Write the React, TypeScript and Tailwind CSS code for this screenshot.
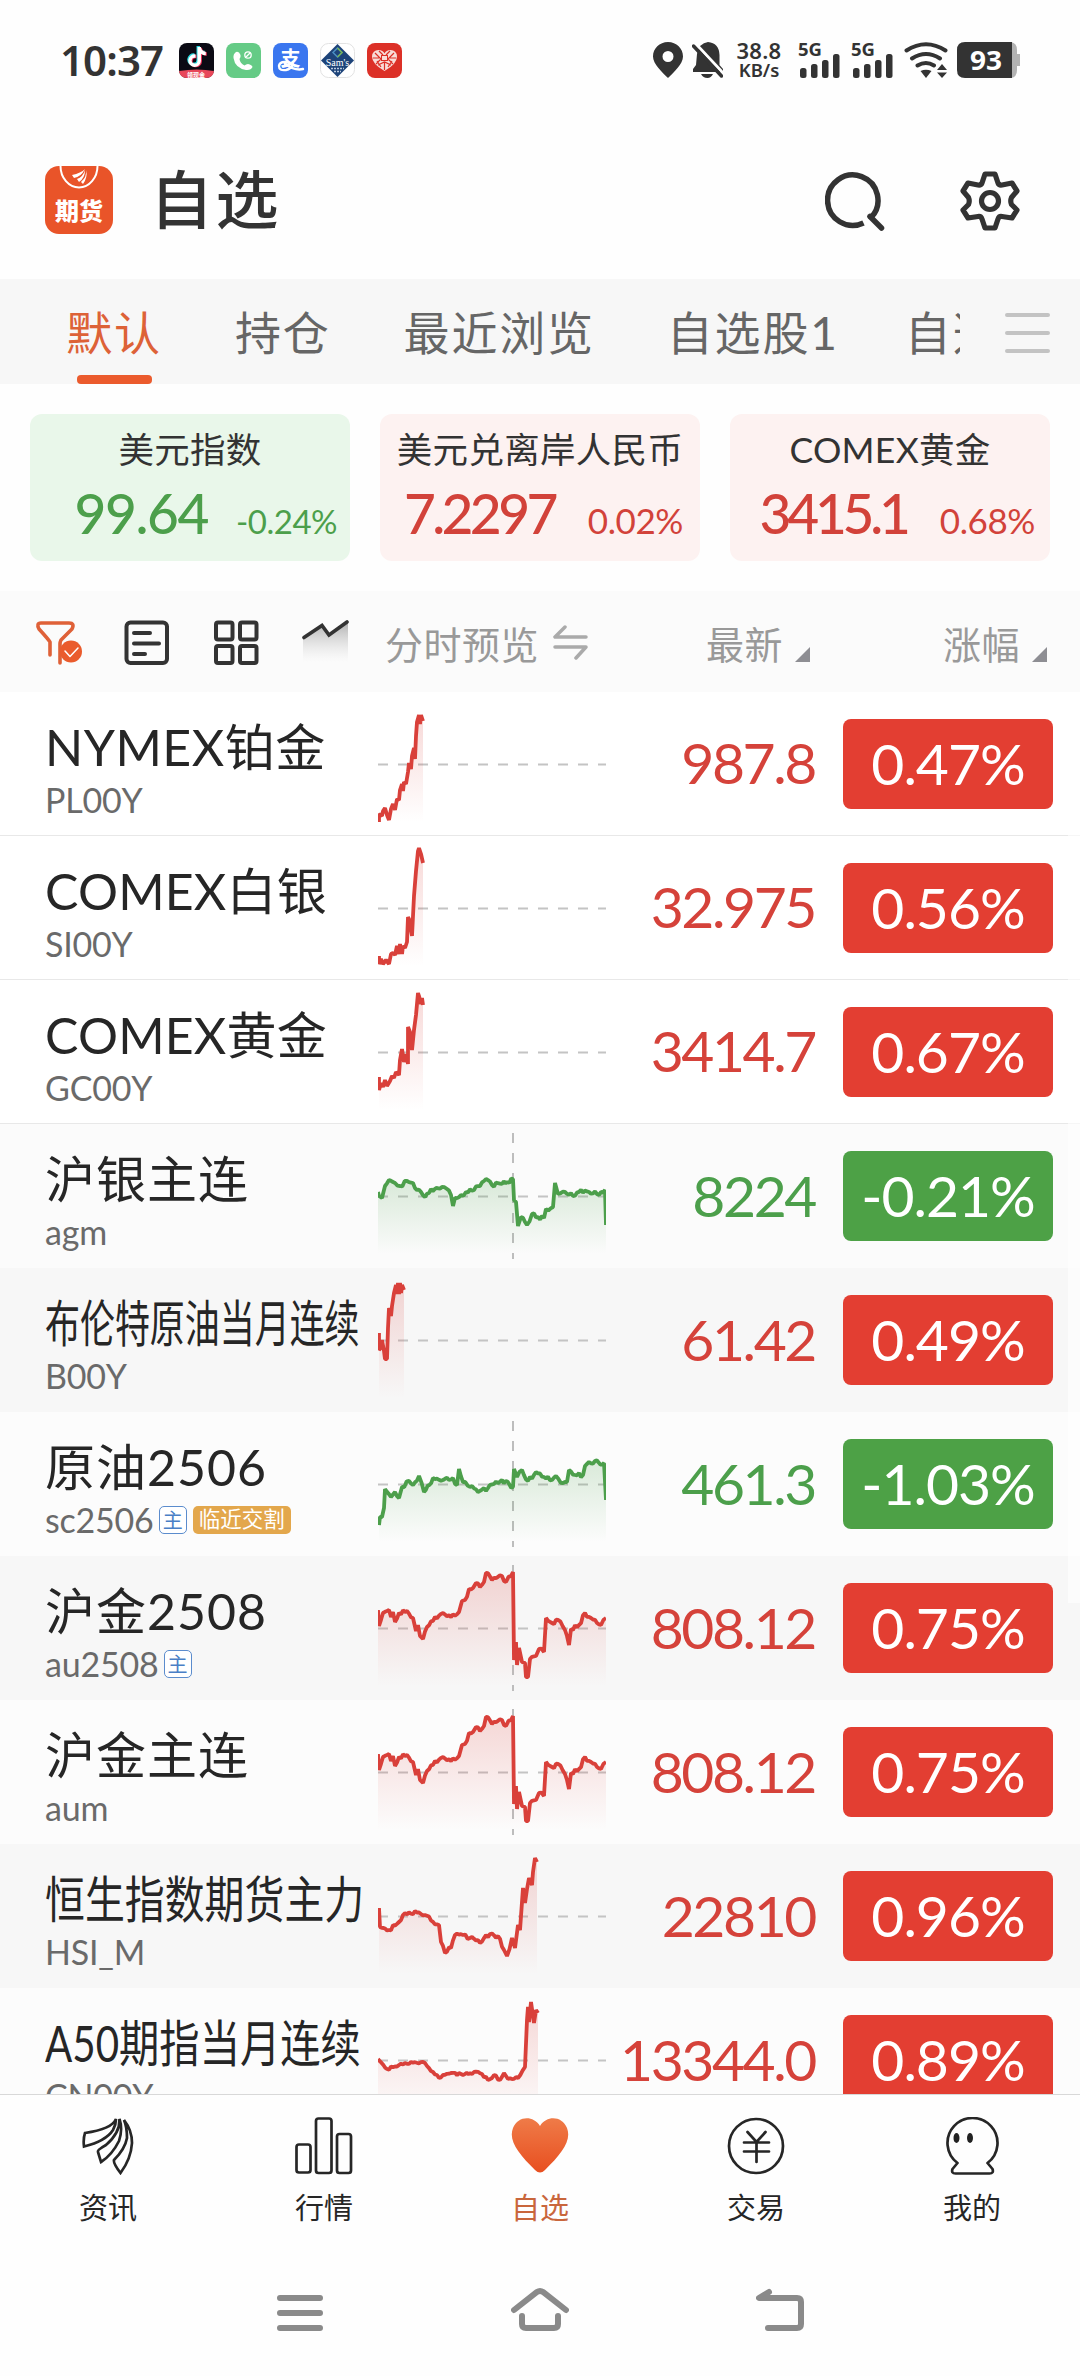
import { useId } from "react";
import { FaTiktok } from "react-icons/fa6";

type Point = [number, number];

interface Quote {
  name: string;
  nameClass?: string;
  code: string;
  price: string;
  change: string;
  up: boolean;
  bg: string;
  main?: boolean;
  delivery?: boolean;
  split?: boolean;
  noise?: number;
  points: Point[];
}

const RED = "#d9403a";
const GREEN = "#4c9f4b";

const goldCurve: Point[] = [
  [0, 54], [1, 70], [5, 57], [11, 54], [13, 61], [15, 56], [17, 66], [21, 57], [29, 55], [35, 62], [38, 75], [40, 69],
  [42, 80], [45, 83], [49, 71], [57, 61], [65, 57], [73, 61], [81, 56], [84, 45], [87, 44], [91, 33], [95, 32], [98, 27], [102, 31],
  [106, 26], [108, 17], [114, 24], [124, 20], [128, 26], [133, 20], [135, 16], [136, 104], [138, 86], [139, 109], [141, 92],
  [144, 106], [147, 107], [148, 121], [150, 121], [152, 103], [158, 100], [161, 93], [166, 96], [168, 62], [174, 67], [180, 64],
  [187, 74], [189, 80], [191, 89], [193, 73], [201, 69], [207, 57], [213, 62], [223, 69], [228, 62],
];

const quotes: Quote[] = [
  {
    name: "NYMEX铂金", nameClass: "tracking-[0.5px]", code: "PL00Y", price: "987.8", change: "0.47%", up: true,
    bg: "bg-white border-b border-[#e8e8e8]",
    points: [
      [1, 130], [1, 122], [4, 124], [5, 119], [7, 116], [9, 123], [11, 128], [13, 117], [15, 112], [17, 118], [19, 107],
      [21, 108], [22, 98], [24, 92], [25, 99], [26, 90], [28, 92], [30, 80], [31, 71], [33, 77], [34, 64], [36, 56],
      [37, 67], [38, 44], [39, 30], [41, 23], [42, 32], [43, 23], [45, 29],
    ],
  },
  {
    name: "COMEX白银", nameClass: "tracking-[0.2px]", code: "SI00Y", price: "32.975", change: "0.56%", up: true,
    bg: "bg-white border-b border-[#e8e8e8]",
    points: [
      [1, 120], [1, 128], [3, 123], [5, 128], [8, 124], [11, 128], [13, 118], [15, 117], [17, 119], [19, 110], [21, 118],
      [22, 108], [24, 118], [25, 110], [27, 112], [29, 106], [30, 81], [32, 85], [33, 94], [34, 100], [35, 80], [36, 60],
      [38, 35], [40, 15], [41, 12], [43, 18], [45, 27],
    ],
  },
  {
    name: "COMEX黄金", nameClass: "tracking-[0.2px]", code: "GC00Y", price: "3414.7", change: "0.67%", up: true,
    bg: "bg-white border-b border-[#e8e8e8]",
    points: [
      [1, 97], [1, 110], [3, 103], [5, 107], [7, 100], [9, 106], [12, 101], [14, 96], [16, 98], [18, 92], [21, 95],
      [22, 80], [24, 69], [26, 82], [28, 74], [30, 84], [30, 47], [32, 52], [34, 70], [36, 50], [38, 35], [40, 13],
      [41, 16], [43, 24], [44, 18], [45, 25],
    ],
  },
  {
    name: "沪银主连", code: "agm", price: "8224", change: "-0.21%", up: false, bg: "bg-[#fbfbfb]", split: true, noise: 2.5,
    points: [
      [0, 68], [1, 72], [4, 74], [7, 62], [11, 56], [17, 59], [22, 62], [29, 57], [35, 59], [39, 66], [43, 68],
      [47, 73], [53, 65], [64, 63], [69, 65], [73, 71], [75, 82], [77, 74], [83, 71], [88, 68], [96, 66], [102, 62],
      [108, 55], [114, 61], [124, 60], [135, 55], [136, 76], [138, 78], [140, 102], [143, 93], [149, 101], [154, 90], [160, 93],
      [166, 94], [168, 85], [175, 83], [177, 59], [180, 70], [187, 68], [195, 72], [203, 66], [211, 68], [219, 70],
      [227, 66], [228, 101],
    ],
  },
  {
    name: "布伦特原油当月连续", nameClass: "scale-x-[0.699]", code: "B00Y", price: "61.42", change: "0.49%", up: true, bg: "bg-[#f7f7f7]",
    points: [
      [1, 65], [1, 82], [3, 80], [4, 72], [6, 83], [7, 91], [9, 91], [10, 60], [11, 40], [13, 48], [14, 38], [16, 25],
      [18, 17], [19, 26], [20, 15], [21, 26], [22, 15], [23, 25], [24, 17], [26, 22],
    ],
  },
  {
    name: "原油2506", code: "sc2506", price: "461.3", change: "-1.03%", up: false, bg: "bg-[#fcfcfc]", main: true,
    delivery: true, split: true, noise: 2.5,
    points: [
      [1, 113], [2, 105], [4, 105], [6, 96], [7, 77], [13, 85], [17, 80], [21, 86], [24, 75], [31, 69], [35, 73],
      [41, 64], [46, 80], [55, 66], [65, 68], [75, 66], [79, 73], [81, 57], [85, 70], [92, 75], [100, 80], [110, 76],
      [124, 68], [135, 75], [136, 57], [139, 65], [144, 58], [150, 69], [158, 60], [166, 65], [174, 68], [178, 64],
      [185, 71], [189, 70], [191, 58], [197, 63], [205, 63], [207, 54], [211, 50], [217, 49], [226, 51], [228, 88],
    ],
  },
  {
    name: "沪金2508", code: "au2508", price: "808.12", change: "0.75%", up: true, bg: "bg-[#f7f7f7]", main: true,
    split: true, noise: 2.5, points: goldCurve,
  },
  {
    name: "沪金主连", code: "aum", price: "808.12", change: "0.75%", up: true, bg: "bg-[#fcfcfc]", split: true, noise: 2.5,
    points: goldCurve,
  },
  {
    name: "恒生指数期货主力", nameClass: "scale-x-[0.798]", code: "HSI_M", price: "22810", change: "0.96%", up: true,
    bg: "bg-[#f7f7f7]", noise: 2.5,
    points: [
      [1, 64], [2, 83], [11, 86], [21, 78], [25, 71], [37, 67], [47, 71], [61, 81], [63, 98], [67, 109], [73, 104],
      [77, 91], [85, 91], [92, 94], [102, 99], [108, 91], [120, 92], [126, 106], [129, 112], [134, 94], [137, 104],
      [140, 81], [142, 86], [145, 44], [147, 59], [149, 45], [151, 34], [154, 41], [155, 28], [157, 14], [159, 18],
    ],
  },
  {
    name: "A50期指当月连续", nameClass: "scale-x-[0.806]", code: "CN00Y", price: "13344.0", change: "0.89%", up: true,
    bg: "bg-[#fcfcfc]", noise: 1.5,
    points: [
      [0, 71], [9, 81], [21, 77], [33, 74], [47, 75], [55, 84], [61, 90], [73, 85], [85, 87], [96, 84], [104, 86],
      [110, 92], [116, 87], [122, 92], [126, 85], [130, 91], [140, 90], [147, 79], [149, 32], [150, 19], [151, 34],
      [153, 14], [156, 35], [158, 22], [160, 25],
    ],
  },
];

const indices = [
  {
    name: "美元指数", value: "99.64", change: "-0.24%", box: "bg-[#e9f7ea] text-[#4c9f4b]",
    valueClass: "tracking-[-1.4px]", changeClass: "ml-[28px] mr-[-4px] text-[33px] tracking-[-0.5px]",
  },
  {
    name: "美元兑离岸人民币", value: "7.2297", change: "0.02%", box: "bg-[#fdf2f1] text-[#d2423a]",
    valueClass: "tracking-[-3.6px]", changeClass: "ml-[33px] text-[35px] tracking-[-0.4px]",
  },
  {
    name: "COMEX黄金", value: "3415.1", change: "0.68%", box: "bg-[#fdf2f1] text-[#d2423a]",
    valueClass: "tracking-[-4.2px]", changeClass: "ml-[33px] mr-[-2px] text-[35px] tracking-[-0.4px]",
  },
];

// adds small deterministic ticks between the key points
function roughen(points: Point[], amp: number): Point[] {
  if (!amp) return points;
  const out: Point[] = [];
  let seed = 7;
  points.forEach(([x, y], i) => {
    out.push([x, y]);
    const next = points[i + 1];
    if (!next) return;
    const steps = Math.floor((next[0] - x) / 1.8);
    for (let s = 1; s < steps; s++) {
      seed = (seed * 73 + 41) % 997;
      const t = s / steps;
      out.push([x + (next[0] - x) * t, y + (next[1] - y) * t + (seed / 997 - 0.5) * 2 * amp]);
    }
  });
  return out;
}

function Sparkline({ quote }: { quote: Quote }) {
  const id = useId();
  const color = quote.up ? RED : GREEN;
  const pts = roughen(quote.points, quote.noise ?? 0);
  const line = pts.map(([x, y]) => `${x.toFixed(1)},${y.toFixed(1)}`).join(" ");
  const lastX = pts[pts.length - 1][0];
  const top = Math.min(...pts.map((p) => p[1]));
  return (
    <svg width="228" height="144" viewBox="0 0 228 144" className="shrink-0">
      <defs>
        <linearGradient id={id} gradientUnits="userSpaceOnUse" x1="0" y1={top} x2="0" y2="130">
          <stop offset="0" stopColor={color} stopOpacity="0.2" />
          <stop offset="1" stopColor={color} stopOpacity="0" />
        </linearGradient>
      </defs>
      <path d="M0 72.5H228" stroke="#c4c4c4" strokeWidth="2" strokeDasharray="10 10" />
      {quote.split && <path d="M135 9V135" stroke="#bdbdbd" strokeWidth="2" strokeDasharray="10 10" />}
      <polygon points={`${pts[0][0]},131 ${line} ${lastX},131`} fill={`url(#${id})`} />
      <polyline points={line} fill="none" stroke={color} strokeWidth="3.8" strokeLinejoin="bevel" />
    </svg>
  );
}

function QuoteRow({ quote }: { quote: Quote }) {
  return (
    <div className={`flex h-[144px] shrink-0 ${quote.bg}`}>
      <div className="w-[378px] shrink-0 pl-[45px] pt-[30px]">
        <div className={`w-max origin-left text-[50px] leading-[50px] text-[#262626] ${quote.nameClass ?? "tracking-[1px]"}`}>{quote.name}</div>
        <div className="mt-[11px] flex h-[34px] items-center">
          <span className="text-[34px] leading-[34px] tracking-[-0.2px] text-[#6a6a6a]">{quote.code}</span>
          {quote.main && (
            <span className="ml-[5px] flex h-7 w-7 items-center justify-center rounded-[5px] border-[1.5px] border-[#5b8ccd] bg-white text-[20px] leading-none text-[#4a7fc6]">
              主
            </span>
          )}
          {quote.delivery && (
            <span className="ml-[6px] flex h-7 w-[98px] items-center justify-center rounded-[5px] bg-[#e3a74c] text-[21.5px] leading-none text-white">
              临近交割
            </span>
          )}
        </div>
      </div>
      <Sparkline quote={quote} />
      <div
        className={`-ml-4 flex w-[225px] items-center justify-end pb-[2px] text-[57px] leading-none tracking-[-2.4px] ${quote.up ? "text-[#d5423a]" : "text-[#4c9f4b]"}`}
      >
        {quote.price}
      </div>
      <div
        className={`ml-[28px] mt-[27px] flex h-[90px] w-[210px] items-center justify-center rounded-lg pb-[2px] text-[57px] leading-none tracking-[-1px] text-white ${quote.up ? "bg-[#e33e32]" : "bg-[#4da146]"}`}
      >
        {quote.change}
      </div>
    </div>
  );
}

function Signal() {
  return (
    <svg width="43" height="36" viewBox="0 0 43 36" fill="#333" overflow="visible">
      <text x="0" y="14" fontSize="18" fontWeight="700" fontFamily="Noto Sans" textLength="24" lengthAdjust="spacingAndGlyphs">5G</text>
      <rect x="2" y="26" width="6.5" height="10" rx="2.5" />
      <rect x="13" y="22" width="6.5" height="14" rx="2.5" />
      <rect x="24" y="18" width="6.5" height="18" rx="2.5" />
      <rect x="35" y="12" width="6.5" height="24" rx="2.5" />
    </svg>
  );
}

function StatusBar() {
  return (
    <div className="flex h-[120px] items-center pl-[60px] pr-[60px] text-[#333]">
      <div className="w-[119px] font-['Noto_Sans',sans-serif] text-[42px] font-semibold leading-none tracking-[-0.9px]">10:37</div>
      <div className="flex gap-3">
        <svg width="35" height="35" viewBox="0 0 35 35">
          <rect width="35" height="35" rx="8" fill="#0b0a14" />
          <path d="M0 28Q18 25 35 28Q34 35 27 35H8Q1 35 0 28Z" fill="#e8475a" />
          <FaTiktok x="7" y="3" size="20" color="#29d9e0" />
          <FaTiktok x="9" y="4.5" size="20" color="#f0325a" />
          <FaTiktok x="8" y="4" size="20" color="#fff" />
          <text x="8" y="33.5" fontSize="6" fill="#fff" fontWeight="700">领现金</text>
        </svg>
        <svg width="35" height="35" viewBox="0 0 35 35">
          <rect width="35" height="35" rx="8" fill="#65cb86" />
          <path d="M10 9Q7 11 7.5 15Q9 25 20 27Q25 27.5 26.5 24Q26 22 22 21Q20 21 18.5 22.5Q14 20 13.5 16Q15 14 14.5 12Q13 8 10 9Z" fill="#fff" />
          <circle cx="22" cy="12" r="3.2" fill="none" stroke="#fff" strokeWidth="1.3" />
          <path d="M20 14L24 10" stroke="#fff" strokeWidth="1.3" />
        </svg>
        <svg width="35" height="35" viewBox="0 0 35 35">
          <rect width="35" height="35" rx="8" fill="#3a76ef" />
          <text x="7.5" y="23" fontSize="20" fill="#fff" fontWeight="700">支</text>
          <path d="M17 20Q7 17 6 23Q6 28 13 27Q18 26 20 21M12 21Q22 28 30 26" fill="none" stroke="#fff" strokeWidth="2.4" strokeLinecap="round" />
        </svg>
        <svg width="35" height="35" viewBox="0 0 35 35">
          <rect x=".5" y=".5" width="34" height="34" rx="8" fill="#fff" stroke="#e2e2e2" />
          <path d="M17.5 1L34 17.5L17.5 34L1 17.5Z" fill="#1d4379" />
          <path d="M17.5 5L22 9.5L17.5 14L13 9.5Z" fill="none" stroke="#4b8fc2" strokeWidth="1.5" />
          <path d="M17.5 5L22 9.5L17.5 14" fill="none" stroke="#77b255" strokeWidth="1.5" />
          <text x="17.5" y="22.5" fontSize="10" fill="#fff" textAnchor="middle" fontFamily="Liberation Serif">Sam's</text>
          <path d="M11 25.5H24M14 28.5H21" stroke="#b9c8dc" strokeWidth="1.3" strokeDasharray="2 1" />
        </svg>
        <svg width="35" height="35" viewBox="0 0 35 35">
          <rect width="35" height="35" rx="8" fill="#dc3027" />
          <path d="M17.5 28Q5 21 5 13.5Q5.5 7 11.5 7Q16 7 17.5 10.5Q19 7 23.5 7Q29.5 7 30 13.5Q30 21 17.5 28Z" fill="#f8dcd8" />
          <path d="M8 10L14 16L9 21M12 8L16 12M27 10L21 16L26 21M23 8L19 12M11 22L17.5 19L24 22M17.5 19V27M6 15H12M23 15H29M14 24L10 18M21 24L25 18" stroke="#dc3027" strokeWidth="1.2" fill="none" />
          <rect x="14.5" y="12.5" width="6" height="5" fill="#f8dcd8" stroke="#dc3027" />
        </svg>
      </div>
      <div className="ml-auto flex h-9 items-start">
        <svg width="30" height="36" viewBox="0 0 30 36">
          <path fillRule="evenodd" d="M15 0C23.5 0 30 6.5 30 14.5C30 22 21 30 15 36C9 30 0 22 0 14.5C0 6.5 6.5 0 15 0ZM15 9A5.5 5.5 0 1 0 15 20A5.5 5.5 0 1 0 15 9Z" fill="#333" />
        </svg>
        <svg width="31" height="36" viewBox="0 0 31 36" className="ml-[9px]">
          <path d="M5 12Q7 1 16 0Q27 1 27.5 13V23L31 27V30H1V27L4 23Z" fill="#333" />
          <path d="M9 32H21Q19 36 15.5 36Q11 36 9 32Z" fill="#333" />
          <path d="M3.5 1.5L32 32" stroke="#fff" strokeWidth="3" />
          <path d="M1.5 4L29.5 34" stroke="#333" strokeWidth="3.5" strokeLinecap="round" />
        </svg>
        <div className="ml-[12px] flex w-12 flex-col items-center font-['Noto_Sans',sans-serif] font-semibold">
          <span className="text-[22px] leading-[17px] tracking-[0.3px]">38.8</span>
          <span className="mt-[2px] text-[18.5px] leading-[18px]">KB/s</span>
        </div>
        <div className="ml-[15px]"><Signal /></div>
        <div className="ml-[10px]"><Signal /></div>
        <svg width="44" height="36" viewBox="0 0 44 36" className="ml-[10px]" fill="none" stroke="#333" strokeWidth="4" strokeLinecap="round">
          <path d="M2.5 8.5Q22 -4 41.5 8.5M8 16.5Q22 7.5 36 16.5M13.5 23.5Q22 18.5 30 23.5" />
          <path d="M16.5 29Q22 26.5 27.5 29L22 36Z" fill="#333" stroke="none" />
          <path d="M33 28L38 22L43 28ZM33 30.5H43L38 36Z" fill="#333" stroke="none" />
        </svg>
        <svg width="63" height="36" viewBox="0 0 63 36" className="ml-[9px]">
          <path d="M50 0H54Q60 1 60 8V12H63V24H60V28Q60 35 54 36H50Z" fill="#b3b3b3" />
          <path d="M8 0H55V36H8Q0 36 0 28V8Q0 0 8 0Z" fill="#333" />
          <text x="13" y="28" fontSize="27" fontWeight="700" fill="#fff" fontFamily="Noto Sans" textLength="32" lengthAdjust="spacingAndGlyphs">93</text>
        </svg>
      </div>
    </div>
  );
}

function Header() {
  return (
    <div className="flex h-[159px] items-start pl-[45px] pr-[60px] pt-[46px]">
      <svg width="68" height="68" viewBox="0 0 68 68">
        <rect width="68" height="68" rx="14" fill="#e95429" />
        <path d="M15.5 0A18.5 21.5 0 0 0 52.5 0" fill="none" stroke="#fff" strokeWidth="2" />
        <path d="M40 3Q36 7 27 9L29 12Q36 11 40 3ZM40 4Q38 11 32 13L34 16Q40 12 40 4ZM41 4Q42 11 36 16L38 18Q43 11 41 4Z" fill="#fff" />
        <text x="10" y="53.5" fontSize="24" fontWeight="900" fill="#fff">期货</text>
      </svg>
      <h1 className="ml-[37px] text-[63px] font-medium leading-[66px] tracking-[2.5px] text-[#333]">自选</h1>
      <svg width="60" height="60" viewBox="0 0 60 60" className="ml-auto mt-[5px]" fill="none" stroke="#333" strokeWidth="5.5">
        <path d="M46 46.6A25.2 25.2 0 1 0 38.5 52" />
        <path d="M45 45.5L56.5 57" strokeLinecap="round" />
      </svg>
      <svg width="60" height="60" viewBox="0 0 60 60" className="ml-[75px] mt-[5px]" fill="none" stroke="#333" strokeWidth="5.2" strokeLinejoin="round">
        <path d="M25 3H35L38 12Q39 14.5 42 14L52 12L57 20L51.5 26.5Q50 30 51.5 33.5L57 39L52 47L42 45.5Q39 45 38 48L35 57H25L22 48Q21 45 18 45.5L8 47L3 39L8.5 33.5Q10 30 8.5 26.5L3 20L8 12L18 14Q21 14.5 22 12Z" />
        <circle cx="30" cy="30" r="8.5" />
      </svg>
    </div>
  );
}

function Tabs() {
  return (
    <div className="flex h-[105px] bg-[#f7f7f7] text-[46px] tracking-[1.8px] text-[#666]">
      <div className="flex w-[960px] overflow-hidden whitespace-nowrap pl-[66px] leading-[107px]">
        <div className="flex w-24 shrink-0 flex-col items-center text-[#dd6237]">
          <span className="h-24 shrink-0">默认</span>
          <i className="h-[9px] w-[75px] shrink-0 rounded-[4px] bg-[#eb5b2d]" />
        </div>
        <span className="ml-[73px]">持仓</span>
        <span className="ml-[73px]">最近浏览</span>
        <span className="ml-[72px]">自选股1</span>
        <span className="ml-[66px]">自选股2</span>
      </div>
      <div className="ml-[45px] mt-[34px] flex w-[45px] flex-col gap-[14px]">
        <i className="h-1 rounded-full bg-[#c3c3c3]" />
        <i className="h-1 rounded-full bg-[#c3c3c3]" />
        <i className="h-1 rounded-full bg-[#c3c3c3]" />
      </div>
    </div>
  );
}

function ListHeader() {
  return (
    <div className="flex h-[101px] items-start bg-[#fbfbfb] text-[38px] leading-[38px] tracking-[0.5px] text-[#999]">
      <svg width="48" height="48" viewBox="0 0 48 48" className="ml-[35px] mt-[29px]" fill="none" stroke="#df6138" strokeWidth="3.6" strokeLinecap="round" strokeLinejoin="round">
        <path d="M15 35V22Q14 20 4 9Q1 3 6 3H34Q40 3 37 9L26 20Q25 22 25 24V43" />
        <circle cx="36" cy="31.5" r="11" fill="#ea5b2c" stroke="none" />
        <path d="M30 31L35 36.5L43 28" stroke="#fff" strokeWidth="1.5" />
      </svg>
      <svg width="45" height="45" viewBox="0 0 45 45" className="ml-[41px] mt-[29px]" fill="none" stroke="#333" strokeWidth="4" strokeLinecap="round">
        <rect x="2.5" y="2.5" width="40.5" height="40.5" rx="4" />
        <path d="M10 13H26M10 23.5H35M10 34H21" />
      </svg>
      <svg width="45" height="45" viewBox="0 0 45 45" className="ml-[45px] mt-[29px]" fill="none" stroke="#333" strokeWidth="4">
        <rect x="2" y="2.5" width="16.5" height="17" rx="2" />
        <rect x="26" y="2.5" width="16.5" height="17" rx="2" />
        <rect x="2" y="26" width="16.5" height="17" rx="2" />
        <rect x="26" y="26" width="16.5" height="17" rx="2" />
      </svg>
      <svg width="47" height="45" viewBox="0 0 47 45" className="ml-[43px] mt-[28px]">
        <defs>
          <linearGradient id="trend" x1="0" y1="0" x2="0" y2="1">
            <stop offset="0" stopColor="#777" stopOpacity="0.6" />
            <stop offset="1" stopColor="#ccc" stopOpacity="0" />
          </linearGradient>
        </defs>
        <path d="M1 19L20 6L27 16L46 2V43H1Z" fill="url(#trend)" />
        <path d="M2 18.5L20 6.5L27 16L45 3" fill="none" stroke="#333" strokeWidth="3.6" strokeLinecap="round" />
      </svg>
      <span className="ml-[36px] mt-[34px] w-[154px] whitespace-nowrap">分时预览</span>
      <svg width="36" height="36" viewBox="0 0 36 36" className="ml-[14px] mt-[33px]" fill="none" stroke="#aaa" strokeWidth="3.5" strokeLinecap="round" strokeLinejoin="round">
        <path d="M12 3L2 13H33M2 23H33L23 34" />
      </svg>
      <span className="ml-[117px] mt-[34px] w-[78px]">最新</span>
      <svg width="15" height="15" viewBox="0 0 15 15" className="ml-[11px] mt-[56px]"><path d="M15 0V15H0Z" fill="#8e8e93" /></svg>
      <span className="ml-[133px] mt-[34px] w-[78px]">涨幅</span>
      <svg width="15" height="15" viewBox="0 0 15 15" className="ml-[11px] mt-[56px]"><path d="M15 0V15H0Z" fill="#8e8e93" /></svg>
    </div>
  );
}

const navItems = [
  {
    label: "资讯",
    icon: (
      <svg width="52" height="58" viewBox="0 0 52 58" fill="none" stroke="#262626" strokeWidth="2.7">
        <path d="M34 2Q30 12 3 16Q1 22 2 29.5Q24 24 31 13Q34 8 34 2Z" />
        <path d="M37.5 2Q38 16 24 28Q15 33 16 35L19 45Q30 38 37 24Q41 12 37.5 2Z" />
        <path d="M42 3Q50 13 50 26Q49 42 38.5 56Q31 46 32 43Q43 32 45 21Q45 10 42 3Z" />
      </svg>
    ),
  },
  {
    label: "行情",
    icon: (
      <svg width="58" height="58" viewBox="0 0 58 58" fill="none" stroke="#262626" strokeWidth="2.7">
        <rect x="1.5" y="27.5" width="14" height="28" rx="2.5" />
        <rect x="21" y="1.5" width="15.5" height="54.5" rx="2.5" />
        <rect x="42" y="17" width="14" height="39" rx="2.5" />
      </svg>
    ),
  },
  {
    label: "自选",
    icon: (
      <svg width="60" height="58" viewBox="0 0 60 58">
        <defs>
          <linearGradient id="heart" x1="0" y1="0" x2="0" y2="1">
            <stop offset="0" stopColor="#ef7b48" />
            <stop offset="1" stopColor="#e84f20" />
          </linearGradient>
        </defs>
        <path d="M30 9C23 -2 8 -1 3 11C-2 24 9 37 25 53Q30 58 35 53C51 37 62 24 57 11C52 -1 37 -2 30 9Z" fill="url(#heart)" />
      </svg>
    ),
  },
  {
    label: "交易",
    icon: (
      <svg width="58" height="58" viewBox="0 0 58 58" fill="none" stroke="#262626" strokeWidth="2.7" strokeLinecap="round">
        <circle cx="29" cy="29" r="27" />
        <path d="M20.5 15L29.5 25L38.5 15M17 25.5H42M17 34.5H42M29.5 25V45" />
      </svg>
    ),
  },
  {
    label: "我的",
    icon: (
      <svg width="53" height="58" viewBox="0 0 53 58" fill="none" stroke="#262626" strokeWidth="2.7" strokeLinejoin="round">
        <path d="M11.5 46A25 25 0 1 1 41.5 46L46.5 52Q48 56.5 43.5 56.5H9.5Q5 56.5 6.5 52Z" />
        <ellipse cx="10.5" cy="21" rx="3" ry="5" fill="#222" stroke="none" />
        <ellipse cx="24" cy="21" rx="3" ry="5" fill="#222" stroke="none" />
      </svg>
    ),
  },
];

export default function App() {
  return (
    <div className="flex h-[2376px] w-[1080px] flex-col overflow-hidden bg-[#fefefe] font-['Lato','Noto_Sans_CJK_SC',sans-serif]">
      <StatusBar />
      <Header />
      <Tabs />

      <div className="flex h-[207px] shrink-0 gap-[30px] px-[30px] pt-[30px]">
        {indices.map((item) => (
          <div key={item.name} className={`h-[147px] w-[320px] rounded-xl ${item.box}`}>
            <div className="whitespace-nowrap pt-[17px] text-center text-[35.5px] leading-[37px] tracking-[0.3px] text-[#333]">{item.name}</div>
            <div className="mt-[18px] flex items-baseline justify-end pr-[17px] leading-[54px]">
              <span className={`text-[55px] font-medium ${item.valueClass}`}>{item.value}</span>
              <span className={item.changeClass}>{item.change}</span>
            </div>
          </div>
        ))}
      </div>

      <ListHeader />

      <div className="relative flex h-[1402px] shrink-0 flex-col overflow-hidden">
        {quotes.map((quote) => (
          <QuoteRow key={quote.code} quote={quote} />
        ))}
        {/* scroll thumb */}
        <div className="absolute right-0 top-0 h-[911px] w-3 bg-white/60" />
      </div>

      <div className="grid h-[150px] shrink-0 grid-cols-5 border-t border-[#d8d8d8]">
        {navItems.map((item) => (
          <div
            key={item.label}
            className={`flex flex-col items-center pt-[22px] text-[29px] leading-[30px] ${item.label === "自选" ? "text-[#c9663c]" : "text-[#262626]"}`}
          >
            {item.icon}
            <span className="mt-[18px]">{item.label}</span>
          </div>
        ))}
      </div>

      <div className="flex justify-between px-[276px] pt-[42px]">
        <svg width="48" height="48" viewBox="0 0 48 48" stroke="#8a8a8a" strokeWidth="6" strokeLinecap="round">
          <path d="M4 12H44M4 27H44M4 42H44" />
        </svg>
        <svg width="58" height="48" viewBox="0 0 58 48" fill="none" stroke="#8a8a8a" strokeWidth="6" strokeLinecap="round">
          <path d="M3 24L26 6Q29 4 32 6L55 24M11 30V38Q11 42 15 42H43Q47 42 47 38V30" />
        </svg>
        <svg width="48" height="48" viewBox="0 0 48 48" fill="none" stroke="#8a8a8a" strokeWidth="6" strokeLinecap="round" strokeLinejoin="round">
          <path d="M13 6L3 12H41Q45 12 45 16V38Q45 42 41 42H12" />
        </svg>
      </div>
    </div>
  );
}
